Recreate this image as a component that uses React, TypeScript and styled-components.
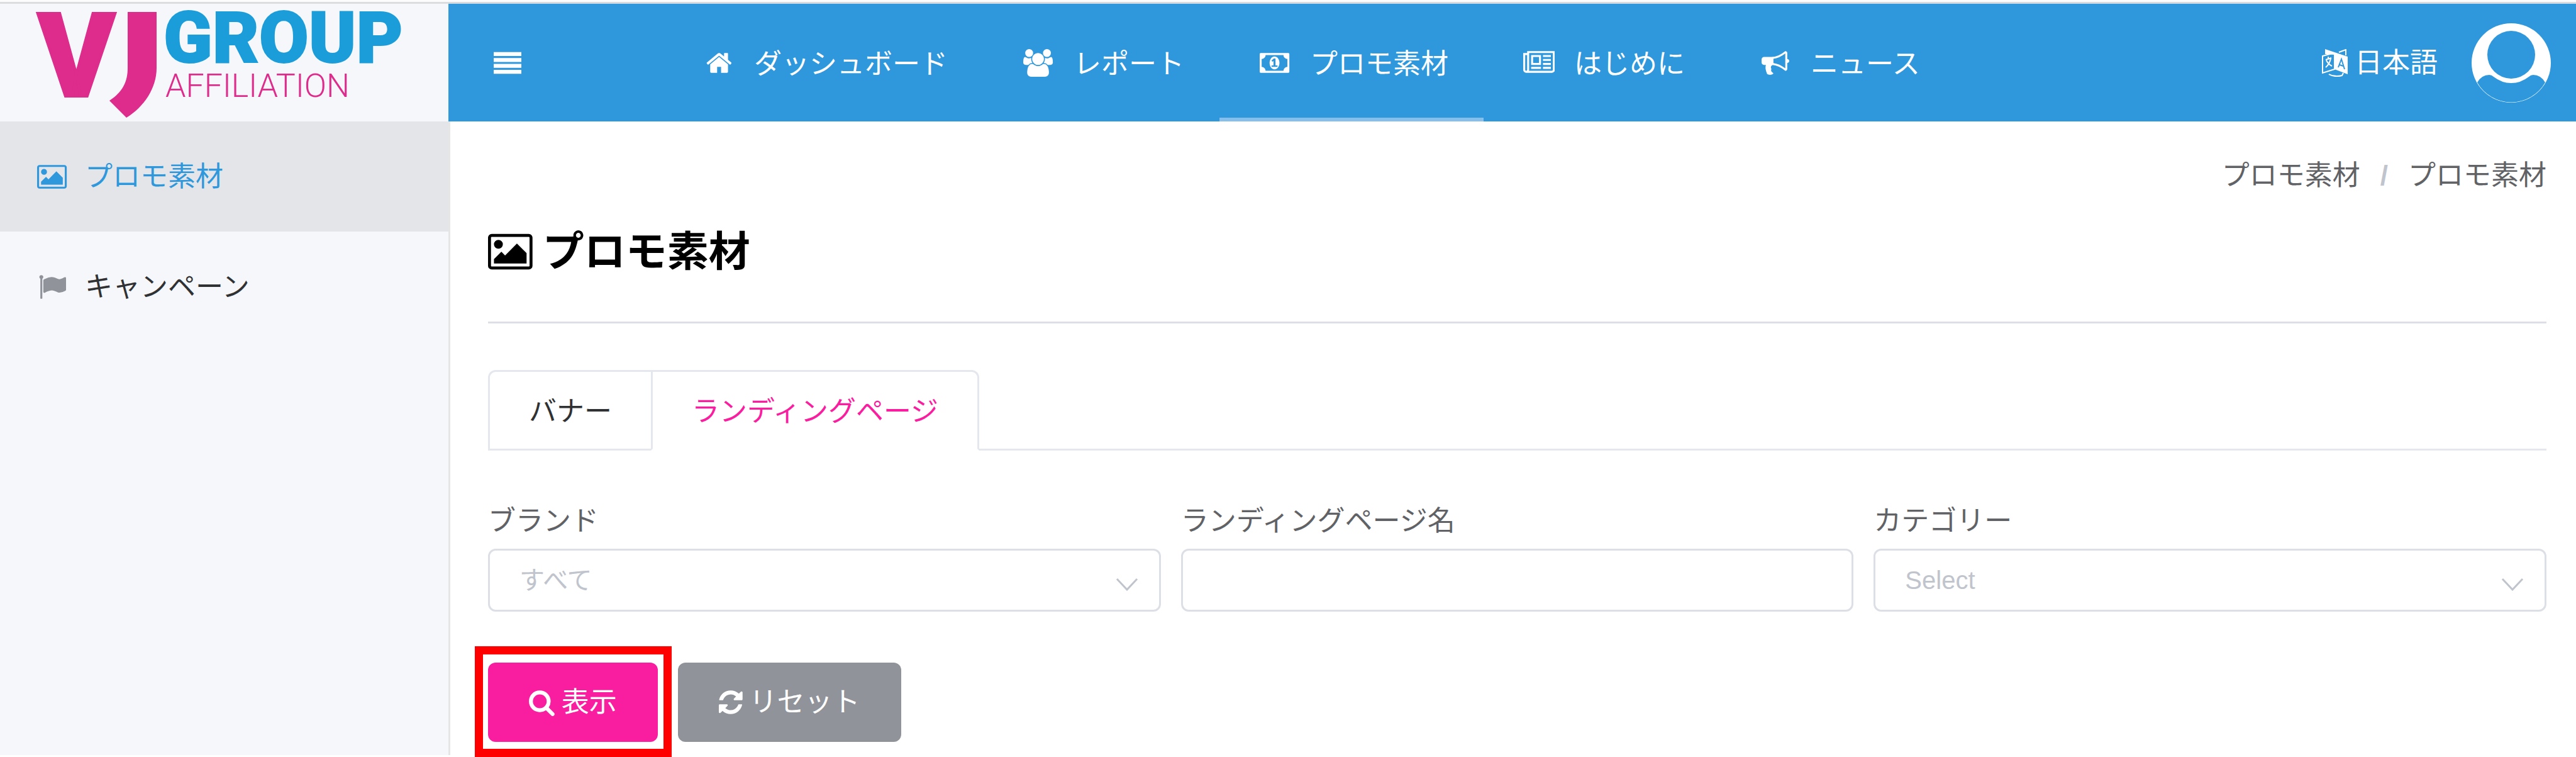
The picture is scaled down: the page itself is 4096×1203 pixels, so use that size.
import React from "react";
import styled, { createGlobalStyle } from "styled-components";

const GlobalStyle = createGlobalStyle`
  *, *::before, *::after { box-sizing: border-box; }
  body {
    margin: 0;
    background: #fff;
    color: #303133;
    font-family: "Liberation Sans", "Noto Sans CJK JP", sans-serif;
    font-size: 44px;
    line-height: 60px;
  }
  button, input, select { font: inherit; }
`;

const ICONS = {
  picture: {
    box: "0 0 1920 1792",
    d: "M640 576q0 80-56 136t-136 56-136-56-56-136 56-136 136-56 136 56 56 136zm1024 384v448h-1408v-192l320-320 160 160 512-512zm96-704h-1600q-13 0-22.5 9.5t-9.5 22.5v1216q0 13 9.5 22.5t22.5 9.5h1600q13 0 22.5-9.5t9.5-22.5v-1216q0-13-9.5-22.5t-22.5-9.5zm160 32v1216q0 66-47 113t-113 47h-1600q-66 0-113-47t-47-113v-1216q0-66 47-113t113-47h1600q66 0 113 47t47 113z",
  },
  flag: {
    box: "0 0 1792 1792",
    d: "M320 256q0 72-64 110v1266q0 13-9.5 22.5t-22.5 9.5h-64q-13 0-22.5-9.5t-9.5-22.5v-1266q-64-38-64-110 0-53 37.5-90.5t90.5-37.5 90.5 37.5 37.5 90.5zm1472 64v763q0 25-12.5 38.5t-39.5 27.5q-215 116-369 116-61 0-123.5-22t-108.5-48-115.5-48-142.5-22q-192 0-464 146-17 9-33 9-26 0-45-19t-19-45v-742q0-32 31-55 21-14 79-43 236-120 421-120 107 0 200 29t219 88q38 19 88 19 54 0 117.5-21t110-47 88-47 54.5-21q26 0 45 19t19 45z",
  },
  bars: {
    box: "0 0 1792 1792",
    d: "M0 192h1792v256h-1792zM0 576h1792v256h-1792zM0 960h1792v256h-1792zM0 1344h1792v256h-1792z",
  },
  home: {
    box: "64 0 1664 1792",
    d: "M1472 992v480q0 26-19 45t-45 19h-384v-384h-256v384h-384q-26 0-45-19t-19-45v-480q0-1 .5-3t.5-3l575-474 575 474q1 2 1 6zm223-69l-62 74q-8 9-21 11h-3q-13 0-21-7l-692-577-692 577q-12 8-24 7-13-2-21-11l-62-74q-8-10-7-23.5t11-21.5l719-599q32-26 76-26t76 26l244 204v-195q0-14 9-23t23-9h192q14 0 23 9t9 23v408l219 182q10 8 11 21.5t-7 23.5z",
  },
  users: {
    box: "0 0 1920 1792",
    d: "M593 896q-162 5-265 128h-134q-82 0-138-40.5t-56-118.5q0-353 124-353 6 0 43.5 21t97.5 42.5 119 21.5q67 0 133-23-5 37-5 66 0 139 81 256zm1071 637q0 120-73 189.5t-194 69.5h-874q-121 0-194-69.5t-73-189.5q0-53 3.5-103.5t14-109 26.5-108.5 43-97.5 62-81 85.5-53.5 111.5-20q10 0 43 21.5t73 48 107 48 135 21.5 135-21.5 107-48 73-48 43-21.5q61 0 111.5 20t85.5 53.5 62 81 43 97.5 26.5 108.5 14 109 3.5 103.5zm-1024-1277q0 106-75 181t-181 75-181-75-75-181 75-181 181-75 181 75 75 181zm704 384q0 159-112.5 271.5t-271.5 112.5-271.5-112.5-112.5-271.5 112.5-271.5 271.5-112.5 271.5 112.5 112.5 271.5zm576 225q0 78-56 118.5t-138 40.5h-134q-103-123-265-128 81-117 81-256 0-29-5-66 66 23 133 23 59 0 119-21.5t97.5-42.5 43.5-21q124 0 124 353zm-128-609q0 106-75 181t-181 75-181-75-75-181 75-181 181-75 181 75 75 181z",
  },
  money: {
    box: "0 0 1920 1792",
    d: "M768 1152h384v-96h-128v-448h-114l-148 137 77 80q42-37 55-57h2v288h-128v96zm512-256q0 70-21 142t-59.5 134-101.5 101-138 39-138-39-101.5-101-59.5-134-21-142 21-142 59.5-134 101.5-101 138-39 138 39 101.5 101 59.5 134 21 142zm512 256v-512q-106 0-181-75t-75-181h-1152q0 106-75 181t-181 75v512q106 0 181 75t75 181h1152q0-106 75-181t181-75zm128-832v1152q0 26-19 45t-45 19h-1792q-26 0-45-19t-19-45v-1152q0-26 19-45t45-19h1792q26 0 45 19t19 45z",
  },
  newspaper: {
    box: "0 0 2048 1792",
    d: "M1024 512h-384v384h384v-384zm128 640v128h-640v-128h640zm0-768v640h-640v-640h640zm640 768v128h-512v-128h512zm0-256v128h-512v-128h512zm0-256v128h-512v-128h512zm0-256v128h-512v-128h512zm-1536 960v-960h-128v960q0 26 19 45t45 19 45-19 19-45zm1664 0v-1088h-1536v1088q0 33-11 64h1483q26 0 45-19t19-45zm128-1216v1216q0 80-56 136t-136 56h-1664q-80 0-136-56t-56-136v-1088h256v-128h1792z",
  },
  bullhorn: {
    box: "0 0 1792 1792",
    d: "M1664 640q53 0 90.5 37.5t37.5 90.5-37.5 90.5-90.5 37.5v384q0 52-38 90t-90 38q-417-347-812-380-58 19-91 66t-31 100.5 40 92.5q-20 33-23 65.5t6 58 33.5 55 48 50 61.5 50.5q-29 58-111.5 83t-168.5 11.5-132-55.5q-7-23-29.5-87.5t-32-94.5-23-89-15-101 3.5-98.5 22-110.5h-122q-66 0-113-47t-47-113v-192q0-66 47-113t113-47h480q435 0 896-384 52 0 90 38t38 90v384zm-128 604v-954q-394 302-768 343v270q377 42 768 341z",
  },
  search: {
    box: "64 0 1664 1792",
    d: "M1216 832q0-185-131.5-316.5t-316.5-131.5-316.5 131.5-131.5 316.5 131.5 316.5 316.5 131.5 316.5-131.5 131.5-316.5zm512 832q0 52-38 90t-90 38q-54 0-90-38l-343-342q-179 124-399 124-143 0-273.5-55.5t-225-150-150-225-55.5-273.5 55.5-273.5 150-225 225-150 273.5-55.5 273.5 55.5 225 150 150 225 55.5 273.5q0 220-124 399l343 343q37 37 37 90z",
  },
  refresh: {
    box: "128 0 1536 1792",
    d: "M1639 1056q0 5-1 7-64 268-268 434.5t-478 166.5q-146 0-282.5-55t-243.5-157l-129 129q-19 19-45 19t-45-19-19-45v-448q0-26 19-45t45-19h448q26 0 45 19t19 45-19 45l-137 137q71 66 161 102t187 36q134 0 250-65t186-179q11-17 53-117 8-23 30-23h192q13 0 22.5 9.5t9.5 22.5zm25-800v448q0 26-19 45t-45 19h-448q-26 0-45-19t-19-45 19-45l138-138q-148-137-349-137-134 0-250 65t-186 179q-11 17-53 117-8 23-30 23h-199q-13 0-22.5-9.5t-9.5-22.5v-7q65-268 270-434.5t480-166.5q146 0 284 55.5t245 156.5l130-129q19-19 45-19t45 19 19 45z",
  },
} as const;

type IconName = keyof typeof ICONS;

const IconSvg = styled.svg<{ $size: number }>`
  display: block;
  flex: none;
  height: ${(p) => p.$size}px;
  width: auto;
  fill: currentColor;
`;

const Icon = ({ name, size = 44 }: { name: IconName; size?: number }) => (
  <IconSvg $size={size} viewBox={ICONS[name].box} aria-hidden="true">
    <path d={ICONS[name].d} />
  </IconSvg>
);

const Page = styled.div`
  display: grid;
  grid-template-columns: 716px minmax(0, 1fr);
  min-height: 100vh;
  border-top: 3px solid #fcfcfc;
  border-bottom: 3px solid #fff;
`;

const Sidebar = styled.aside`
  background: #f5f7fb;
  border-top: 3px solid #dcdddf;
  border-right: 3px solid #e6e6e6;
`;

const LogoLink = styled.a`
  display: block;
  height: 187px;
  padding-left: 56px;
`;

const LogoSvg = styled.svg`
  display: block;
  width: 600px;
  height: 187px;
  overflow: visible;
  font-family: Roboto, sans-serif;
`;

const MenuList = styled.ul`
  list-style: none;
  margin: 0;
  padding: 0;
`;

const MenuLink = styled.a<{ $active?: boolean }>`
  display: flex;
  align-items: center;
  gap: 24px;
  height: 175px;
  padding: 0 55px;
  color: ${(p) => (p.$active ? "#2f98dc" : "#303133")};
  background: ${(p) => (p.$active ? "#e4e5e9" : "transparent")};
  text-decoration: none;
`;

const MenuIcon = styled.span<{ $muted?: boolean }>`
  display: flex;
  justify-content: center;
  width: 56px;
  color: ${(p) => (p.$muted ? "#909399" : "inherit")};
`;

const Header = styled.header`
  display: flex;
  align-items: center;
  height: 190px;
  margin-left: -3px;
  padding: 0 40px 0 72px;
  color: #fff;
  background: #2f98dc;
  border-top: 3px solid #d9dcdf;
`;

const PlainButton = styled.button`
  display: flex;
  align-items: center;
  gap: 10px;
  padding: 0;
  border: 0;
  background: none;
  color: inherit;
`;

const Nav = styled.nav`
  display: flex;
  flex: 1;
  align-self: stretch;
  margin-left: 226px;
`;

const NavLink = styled.a<{ $active?: boolean }>`
  display: flex;
  align-items: center;
  gap: 24px;
  padding: 6px 56px 0;
  color: #fff;
  text-decoration: none;
  border-bottom: 6px solid ${(p) => (p.$active ? "#85bfea" : "transparent")};
`;

const NavIcon = styled.span`
  display: flex;
  justify-content: center;
  width: 64px;
`;

const NavText = styled.span`
  padding-top: 4px;
`;

const Account = styled.div`
  display: flex;
  align-items: center;
  gap: 54px;
`;

const Content = styled.main`
  padding: 56px 47px 0 60px;
`;

const Crumbs = styled.nav`
  display: flex;
  justify-content: flex-end;
  gap: 32px;
  color: #606266;

  a { color: inherit; text-decoration: none; }
`;

const Slash = styled.span`
  color: #c0c4cc;
  font-weight: 700;
`;

const Title = styled.h1`
  display: flex;
  align-items: center;
  gap: 16px;
  margin: 43px 0 0;
  padding-bottom: 63px;
  border-bottom: 3px solid #dcdfe6;
  color: #000;
  font-size: 66px;
  line-height: 96px;
`;

const Tabs = styled.div`
  display: flex;
  margin-top: 74px;
  border-bottom: 3px solid #e4e7ed;
`;

const Tab = styled.button<{ $active?: boolean }>`
  height: 128px;
  margin: 0 0 -3px;
  padding: 4px 62px 0;
  background: #fff;
  color: ${(p) => (p.$active ? "#f91ea0" : "#303133")};
  border: 3px solid #e4e7ed;
  border-bottom-color: ${(p) => (p.$active ? "#fff" : "#e4e7ed")};

  &:first-child { border-top-left-radius: 12px; border-right: 0; }
  &:last-child { border-top-right-radius: 12px; }
`;

const Filters = styled.form`
  display: grid;
  grid-template-columns: repeat(3, minmax(0, 1fr));
  column-gap: 32px;
  row-gap: 81px;
  margin-top: 82px;
`;

const Field = styled.div`
  display: flex;
  flex-direction: column;
  gap: 14px;
`;

const Label = styled.label`
  color: #606266;
`;

const Control = styled.div`
  position: relative;
`;

const controlStyle = `
  display: block;
  width: 100%;
  height: 100px;
  padding: 0 47px;
  border: 3px solid #dcdfe6;
  border-radius: 12px;
  background: #fff;
  font-size: 40px;
`;

const Select = styled.select`
  ${controlStyle}
  appearance: none;
  color: #c0c4cc;
`;

const TextInput = styled.input`
  ${controlStyle}
  color: #606266;
`;

const Chevron = styled.svg`
  position: absolute;
  right: 36px;
  top: 46px;
  width: 36px;
  height: 22px;
  fill: none;
  stroke: #c0c4cc;
  stroke-width: 3;
  pointer-events: none;
`;

const Actions = styled.div`
  display: flex;
  grid-column: 1 / -1;
  gap: 32px;
  padding-bottom: 20px;
`;

const Highlight = styled.div`
  position: relative;

  &::after {
    content: "";
    position: absolute;
    inset: -26px -22px -24px -21px;
    border: 13px solid #f00;
    pointer-events: none;
  }
`;

const Button = styled.button<{ $tone: string }>`
  display: flex;
  align-items: center;
  gap: 11px;
  height: 126px;
  padding: 0 65px;
  border: 0;
  border-radius: 12px;
  background: ${(p) => p.$tone};
  color: #fff;
`;

const Logo = () => (
  <LogoSvg viewBox="56 6 600 187" role="img" aria-label="VJ GROUP AFFILIATION">
    <text x="60" y="153" fontSize="186" fontWeight="900" fill="#dd2c8b" stroke="#dd2c8b" strokeWidth="4">V</text>
    <path
      d="M203 19H249V108C249 140 229 170 201 187L174 160C195 146 203 130 203 108Z"
      fill="#dd2c8b"
    />
    <text x="260" y="99" fontSize="114" fontWeight="900" fill="#1b9dda" stroke="#1b9dda" strokeWidth="2">GROUP</text>
    <text x="263" y="154" fontSize="52" fontWeight="300" fill="#dd2c8b">AFFILIATION</text>
  </LogoSvg>
);

const LanguageIcon = () => (
  <svg width="42" height="44" viewBox="0 0 42 44" aria-hidden="true">
    <path d="M20 9V32L1 38V11L20 6" fill="none" stroke="#fff" strokeWidth="2" />
    <path d="M5 0L41 12V40L20 32V9L5 8Z" fill="#fff" />
    <path d="M27 5L38 1V10" fill="none" stroke="#fff" strokeWidth="2" />
    <path d="M6 17L15 14M10 12V15M14 15Q12 24 6 29M7 18Q10 24 16 27" fill="none" stroke="#fff" strokeWidth="2" />
    <path d="M26 29L31 16L36 32M28 25L34 27" fill="none" stroke="#2f98dc" strokeWidth="2" />
    <path d="M11 40Q20 45 32 42L34 38" fill="none" stroke="#fff" strokeWidth="2" />
  </svg>
);

const AvatarIcon = () => (
  <svg width="126" height="126" viewBox="0 0 126 126" aria-hidden="true">
    <circle cx="63" cy="63" r="63" fill="#fff" />
    <circle cx="63" cy="50" r="38" fill="#2f98dc" />
    <path
      d="M9 94Q16 82 28 82Q32 82 35 85Q48 95 63 95Q78 95 91 85Q94 82 98 82Q110 82 117 94A62 62 0 0 1 9 94Z"
      fill="#2f98dc"
    />
  </svg>
);

const NAV: { icon: IconName; text: string; active?: boolean }[] = [
  { icon: "home", text: "ダッシュボード" },
  { icon: "users", text: "レポート" },
  { icon: "money", text: "プロモ素材", active: true },
  { icon: "newspaper", text: "はじめに" },
  { icon: "bullhorn", text: "ニュース" },
];

const SelectField = ({ id, label, option }: { id: string; label: string; option: string }) => (
  <Field>
    <Label htmlFor={id}>{label}</Label>
    <Control>
      <Select id={id}>
        <option>{option}</option>
      </Select>
      <Chevron viewBox="0 0 36 22" aria-hidden="true">
        <path d="M2 2L18 19L34 2" />
      </Chevron>
    </Control>
  </Field>
);

export default function App() {
  return (
    <>
      <GlobalStyle />
      <Page>
        <Sidebar>
          <LogoLink href="#">
            <Logo />
          </LogoLink>
          <MenuList>
            <li>
              <MenuLink href="#promo" $active>
                <MenuIcon><Icon name="picture" /></MenuIcon>
                プロモ素材
              </MenuLink>
            </li>
            <li>
              <MenuLink href="#campaign">
                <MenuIcon $muted><Icon name="flag" /></MenuIcon>
                キャンペーン
              </MenuLink>
            </li>
          </MenuList>
        </Sidebar>
        <div>
          <Header>
            <PlainButton type="button" aria-label="メニュー">
              <Icon name="bars" />
            </PlainButton>
            <Nav>
              {NAV.map((item) => (
                <NavLink key={item.text} href="#" $active={item.active}>
                  <NavIcon><Icon name={item.icon} /></NavIcon>
                  <NavText>{item.text}</NavText>
                </NavLink>
              ))}
            </Nav>
            <Account>
              <PlainButton type="button">
                <LanguageIcon />
                日本語
              </PlainButton>
              <PlainButton type="button" aria-label="アカウント">
                <AvatarIcon />
              </PlainButton>
            </Account>
          </Header>
          <Content>
            <Crumbs>
              <a href="#promo">プロモ素材</a>
              <Slash>/</Slash>
              <a href="#promo">プロモ素材</a>
            </Crumbs>
            <Title>
              <Icon name="picture" size={66} />
              プロモ素材
            </Title>
            <Tabs role="tablist">
              <Tab type="button" role="tab" aria-selected="false">バナー</Tab>
              <Tab type="button" role="tab" aria-selected="true" $active>ランディングページ</Tab>
            </Tabs>
            <Filters>
              <SelectField id="brand" label="ブランド" option="すべて" />
              <Field>
                <Label htmlFor="page-name">ランディングページ名</Label>
                <TextInput id="page-name" type="text" />
              </Field>
              <SelectField id="category" label="カテゴリー" option="Select" />
              <Actions>
                <Highlight>
                  <Button type="button" $tone="#f91ea0">
                    <Icon name="search" />
                    表示
                  </Button>
                </Highlight>
                <Button type="button" $tone="#909399">
                  <Icon name="refresh" />
                  リセット
                </Button>
              </Actions>
            </Filters>
          </Content>
        </div>
      </Page>
    </>
  );
}
